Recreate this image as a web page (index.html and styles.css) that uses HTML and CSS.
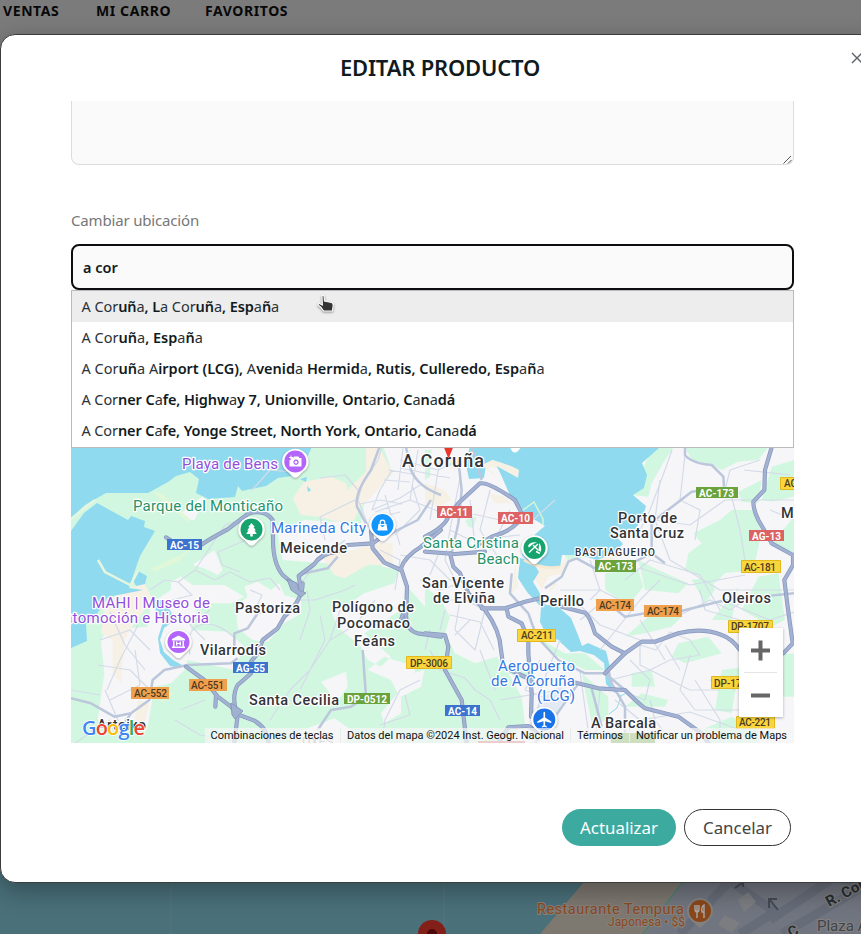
FILE: index.html
```html
<!DOCTYPE html>
<html lang="es">
<head>
<meta charset="utf-8">
<title>Editar producto</title>
<link rel="stylesheet" href="styles.css">
</head>
<body>
<div class="page">
  <nav class="nav"><a class="n1">VENTAS</a><a class="n2">MI CARRO</a><a class="n3">FAVORITOS</a></nav>
  <svg class="backmap" viewBox="0 870 861 64" width="861" height="64">
    <rect y="870" width="861" height="64" fill="#4a707a"/>
    <path d="M171 870V934M444 870V934" stroke="#57757d"/>
    <path d="M594 870L540 934H861V870Z" fill="#7d7870"/>
    <path d="M692 870L646 934H861V870Z" fill="#71757f"/>
    <path d="M692 870L643 934" stroke="#4c8175" stroke-width="1.5"/>
    <path d="M740 870L680 934M733 883L775 912L740 934M800 870L861 883M770 920L830 880M782 934L861 888" stroke="#666c78" stroke-width="9" fill="none"/>
    <path d="M724 915l16 8-8 10-14-8zM738 900l10-8 8 10-12 10z" fill="#7b7d80"/>
    <path d="M778 910L770 900m-1 8v-9h8M735 888l7-5m-6-2h7v6" stroke="#454a52" stroke-width="2" fill="none"/>
    <circle cx="432" cy="934" r="14" fill="#821f18"/><circle cx="432" cy="934" r="5" fill="#4c0908"/>
    <path d="M687 911a13 13 0 1 1 26 0c0 8-8 12-13 17-5-5-13-9-13-17z" fill="#83817e"/>
    <circle cx="700" cy="911" r="11" fill="#8a471a"/>
    <path d="M695 905v4q0 3 2 3t2-3v-4M697 905v13M704 918v-13q-3 2-2 7h2" stroke="#aaa" stroke-width="1.4" fill="none"/>
    <g class="bl"><text x="537" y="914" font-size="14.5" textLength="147" fill="#8c481e">Restaurante Tempura</text>
    <text x="608" y="926" font-size="12" textLength="77" fill="#8c481e">Japonesa • $$</text>
    <text x="817" y="931" font-size="15" fill="#3d444f">Plaza A</text>
    <text x="829" y="907" font-size="15" font-weight="700" fill="#272d35" transform="rotate(-28 829 907)">R. Cor</text>
    <text x="791" y="938" font-size="15" font-weight="700" fill="#272d35" transform="rotate(-28 791 938)">C</text></g>
  </svg>
</div>

<section class="modal">
  <header class="head"><h1>EDITAR PRODUCTO</h1>
    <svg class="close" width="12" height="12" viewBox="0 0 12 12"><path d="M1 1l10 10M11 1L1 11" stroke="#5e6068" stroke-width="1.4"/></svg>
  </header>
  <div class="body">
    <div class="area"><svg width="9" height="9" viewBox="0 0 9 9"><path d="M.5 8.5L8 1M5 8.500L8.500 5" stroke="#555" stroke-width="1"/></svg></div>
    <label class="label">Cambiar ubicación</label>
    <div class="input"><span>a cor</span></div>
    <div class="mapwrap">
    <svg class="map" viewBox="71 290 723 453" width="723" height="453">
      <defs>
        <g id="major">
          <g transform="translate(71 440) scale(.33333)">
            <path d="M285 292L320 315L390 315Q410 300 470 268L530 222Q580 205 605 240L606 300Q606 370 635 405L665 430L690 455"/>
            <path d="M695 430Q695 480 640 530L620 565L575 600L560 640L540 665V700L500 735Q485 760 492 800L505 825L550 842Q590 865 592 909"/>
            <path d="M345 680L400 720L440 770L480 800L500 825L490 909M435 765L433 800"/>
            <path d="M690 450L683 408L730 372Q750 340 800 335L830 315L905 310L930 292"/>
            <path d="M1110 270L1050 320Q1000 350 990 385L1008 440L1006 510Q1000 570 1040 580L1110 590M1000 510L990 540"/>
            <path d="M900 275L905 325L940 368L990 390"/>
          </g>
          <g transform="translate(425 440) scale(.33333)">
            <path d="M0 290Q60 260 70 230L100 190L165 130Q190 125 270 180L290 220Q285 265 200 290L150 320"/>
            <path d="M0 335L90 342L180 335"/>
            <path d="M75 340L85 380L105 400L130 460L180 510Q225 570 228 630L235 680L320 720"/>
            <path d="M170 505L240 505L300 485L345 475M245 505L250 530L290 550L310 600L310 640L320 760L318 830"/>
            <path d="M410 500L480 518Q495 530 510 580L560 620L600 640"/>
            <path d="M540 700L600 640L650 605L690 605L760 580Q830 562 890 585Q920 595 945 630"/>
            <path d="M440 725L520 745L600 750Q640 790 660 805L760 830L830 880L850 909"/>
            <path d="M1040 22L1020 90L1018 150L985 185Q985 210 1000 240L1040 310L1104 345V375L1078 420L1088 500L1103 610L1075 640"/>
            <path d="M0 580L60 585L70 620L60 690L110 780L125 909"/>
            <path d="M220 909L250 862L310 858L345 880"/>
          </g>
        </g>
      </defs>
      <rect x="71" y="290" width="723" height="453" fill="#d2f7e1"/>
      <g transform="translate(71 440) scale(.33333)">
        <path fill="#f6f6f8" d="M930 0L965 100L880 190L870 250L700 240L620 280L635 360L760 370L840 340L895 330L935 380L985 390L970 430L880 460L820 500L780 510L800 560L870 620L890 660L930 680L960 650L900 600L880 580L990 510L1010 440L1062 500H1110V0ZM520 440L560 425L600 450L625 430L640 465L690 480L690 520L640 550L590 605L545 600L500 565L495 500L530 470ZM365 375L430 330L455 390L440 405L400 385ZM300 425L330 410L365 435L460 435L520 470L480 490L420 490L370 500L300 470ZM240 490L300 450L380 500L360 570L470 575L520 620L490 690L350 660L340 690L300 730L250 740L230 860L150 870L80 840L100 700L90 600L110 570L230 560ZM330 220L400 165L385 210L370 240L345 240ZM750 725L825 695L830 740L795 790L770 750ZM890 690L940 650L1000 670L1040 650L1030 700L960 720ZM960 720L1060 690L1050 740L990 770L990 820L940 850L930 820L980 760ZM670 880L790 835L840 870L820 909H660Z"/>
        <path fill="#f6f0e5" d="M665 175L700 125L780 110L825 130L830 150L885 95L885 22L925 22L965 98L905 165L865 205L850 240L800 245L745 230L690 225ZM750 345L850 330L905 310L965 310L965 375L890 375L820 415L790 405ZM100 490L180 440L220 430L245 480L190 550L160 600L150 730L125 700L125 600L90 580ZM200 780L235 790L220 850L190 860Z"/>
        <path fill="#e0f8d7" d="M245 155L270 160L360 240L350 245ZM400 290L320 365L250 395L240 385L330 345ZM270 750L310 760L270 790Z"/>
      </g>
      <g transform="translate(425 440) scale(.33333)">
        <rect y="0" width="1107" height="909" fill="#f6f6f8"/>
        <g fill="#d2f7e1">
          <path d="M0 440L45 475L75 530L60 580L90 640L150 670L215 650L250 700L290 770L300 850L230 909H0ZM665 60L700 0H760L720 60L680 130L670 170L620 165ZM780 22L1030 22L1000 60L940 65L890 90L850 70L800 60ZM940 155L1010 120L1000 190L950 185ZM1040 80L1107 60V170L1040 185L1010 180Z"/>
          <path d="M885 240L920 210L985 210L1010 280L985 390L900 400L870 430L780 390L790 340L830 310L805 280ZM540 400L640 390L655 440L610 495L540 450ZM640 360L700 390L790 430L760 460L660 450ZM800 420L860 410L870 450L840 490ZM670 530L770 530L740 560L660 580L600 590ZM760 610L850 590L890 640L780 670L740 650ZM620 700L680 690L690 740L620 740ZM890 690L960 680L930 760L920 820L870 810ZM1000 410L1060 400L1080 540L1040 560L950 510ZM940 440L920 540L860 540ZM350 600L420 640L480 640L540 690L480 690L380 640ZM470 700L550 770L550 840L500 850ZM650 760L730 780L720 800L600 800ZM830 870L920 830L1000 870V909H840ZM120 240L155 230L145 265L130 260ZM0 30L20 30L15 110L0 120ZM255 660L310 700L300 720L250 700ZM1040 310L1107 230V340ZM410 330L500 345L430 365ZM1000 650L1107 640V770H1040ZM380 790L410 780L390 850L350 870Z"/>
        </g>
        <path fill="#f6f0e5" d="M0 130L60 150L80 180L40 200L0 190ZM60 60L110 60L95 90L60 80ZM190 160L240 170L260 190L210 190ZM170 65L270 95L280 112L200 80ZM300 350L370 385L400 380L430 350L410 400L370 410L350 450L310 380ZM270 370L280 440L260 460ZM500 360L580 345L560 365ZM380 430L400 430L370 460Z"/>
      </g>
      <!-- sea and inlets -->
      <g fill="#8fdaee">
        <path d="M71 290V518L85 505L106 493L148 493L168 482L176 476L190 472L199 479L196 493L208 499L235 497L238 486L242 491L266 486L278 478L292 476L306 460L315 440L390 440V290Z"/>
        <path d="M71 531L84 513L97 503L128 520L131 516L145 521L144 527L155 531L140 556L129 588L143 590L108 597L95 617L86 624L87 641L71 648Z"/>
        <path d="M138 571l9 5-2 8-9 2-3-6z"/>
        <path d="M150 600L165 600L175 620L164 628L160 640L164 652L173 660L182 665L180 668L170 666L160 653L158 638L163 622Z"/>
        <path d="M471 440L466 465L469 479L484 478L486 465L494 460L502 477L512 500L522 512L545 526L540 530L531 538L525 541L522 555L531 564L546 567L560 567L562 555L580 555L597 560L612 554L623 544L616 536L635 529L642 520L646 506L633 495L644 488L647 475L642 463L658 449L663 440Z"/>
        <path d="M520 558L518 578L527 592L541 607L540 622L545 632L558 640L571 652L580 651L594 655L604 663L606 684L613 691L609 675L610 667L606 651L588 643L582 646L578 635L571 618L556 605L546 605L538 590L533 582L539 572L532 561Z"/>
        <path d="M300 479l7-2-1 5zM307 486l4 4-3 2z"/>
      </g>
      <path d="M174 439h120q-14 24-40 36l-22 4q-20-4-30-39" fill="#8fdaee"/>
      <path d="M482 465l10-5q14 3 27 10l-1 8-23-13-6 3 8 10z" fill="#f6f0e5"/>
      <path d="M98 560L105 572L136 588M131 584L138 571M71 519l24-19" fill="none" stroke="#e5f5df" stroke-width="2.500"/>
      <path d="M519 513l15-11 9 17v7" fill="none" stroke="#d6f5d8" stroke-width="1.500"/>
      <path d="M524 560q18 10 36 7" fill="none" stroke="#f6e9d3" stroke-width="3"/>
      <path d="M613 691l8 5 7-4M621 696l-4 12-8 6" fill="none" stroke="#8fdaee" stroke-width="1"/>
      <path d="M540 700l20-14 8 8-30 46h-14z" fill="#e3e9f5"/>
      <!-- local streets -->
      <g class="minor">
        <path d="M110 612L125 645L145 670M100 640L130 630L150 650M98 665L130 670L150 690M107 690L120 660L138 625M110 700L140 685L135 650M120 725L105 690M205 640L190 625L210 610M190 655Q185 630 200 625T235 638"/>
        <path d="M150 590L165 580L178 582L195 570L205 555L225 525L240 520M178 582L192 595L172 600M195 570L215 580L230 572L250 582L270 578L280 590M246 540L218 552L222 565L240 572M250 590L262 595L255 610M300 585L315 565L345 540M355 500L320 517L325 540M252 490L270 470L292 472M320 478L345 475L358 490M295 600L315 600L345 590L355 585"/>
        <path d="M71 690L100 695M75 743L110 720M270 720L290 690L310 670L330 640L340 610M300 690L325 640L320 615M307 590L310 610L300 640M175 720L200 735L230 740M180 710L205 700"/>
        <path d="M384 440L378 460L362 485L358 500L370 530M392 470L380 490L372 510L400 498L420 485M375 512L410 500L440 512M385 495L400 545M412 485L420 510L395 535M400 460L438 470L455 462M400 468L450 478M418 450L410 500M440 460L430 520M360 504L380 500L402 504M370 520L400 512M384 480L410 482M388 470L412 474M403 448L398 490M460 478L450 530L470 540L520 535M455 510L500 520M470 500L475 545M490 490L480 530L500 560M510 510L490 550"/>
        <path d="M380 550L400 560L395 590M400 555L430 560L450 580L480 580M420 580L440 590L455 585M438 555L430 575M450 530L445 560L455 580M440 600L460 600L455 630L475 650L485 610L465 600M450 615L480 622L494 650M455 635L470 620M445 610L440 630M330 640L355 625L375 600"/>
        <path d="M382 743L385 720L400 690L420 680M405 695L410 715L380 725M430 650L440 670L465 678L475 690L490 700L500 720M425 650L430 630M480 650L495 690"/>
        <path d="M660 480L655 520L670 560L720 590L794 590M655 520L690 525L725 500L794 500M685 455L680 500L700 510L695 540M730 490L740 530L745 560M745 600L730 610L710 600L680 615M760 460L730 470L725 490M625 580L650 560L700 575L720 610M560 590L600 590L620 600M600 650L640 600L660 580M580 620L605 600M575 600L600 625L640 640M533 520L555 500"/>
        <path d="M610 680L650 670L670 660L700 655L690 640L670 632L656 650L640 645L640 665L660 675L690 690L720 690M630 660L650 680L645 700L620 690M640 620L665 660M690 655L680 690L695 710L740 710M615 700L640 720L690 712L740 730M650 700L655 720L670 740M665 645L680 670M695 680L720 720L720 743M540 660L525 690L550 700M560 640L540 690L535 740M580 672L590 743M600 690L595 743M500 700L560 690M710 680L735 690"/>
        <path d="M640 530L650 510L665 470L672 450M700 590L705 610L740 620M720 600L770 620L794 612M744 470L790 475M770 510L794 520M640 568L690 585L745 575M590 560L600 590L590 600"/>
      </g>
      <g class="mid">
        <g transform="translate(71 440) scale(.33333)"><path d="M180 820L235 780L245 720L280 690L350 675L480 670L500 655M490 640V580L530 565L560 520L610 500M0 775L60 790L130 830L180 820L160 850M875 630L880 700L885 770L840 800L780 810L740 870M925 22L900 90Q850 160 858 200L890 260M1005 22L1020 90Q1040 140 1110 165M960 280L1040 240L1080 180M700 400L770 385L800 350"/></g>
        <g transform="translate(425 440) scale(.33333)"><path d="M360 445L410 410L430 365L455 355L510 385M620 370L670 345L690 345M780 22L780 45Q800 70 860 75L895 110L897 140M690 240L800 155L840 150M680 250V340L720 370M760 515L880 485L960 475L1107 460M575 510L600 530L660 520M100 60L110 150L100 250L80 340M260 400L255 460L310 520L335 590L400 660L480 700L540 700L600 750M140 20L170 120M330 909L390 830L460 730M550 690L560 730L600 800V909M500 745L530 860"/></g>
      </g>
      <use class="edge" href="#major"/><use class="core" href="#major"/>
      <path d="M287 579l10 4 2 7 7 3-5 4-10-7zM231 703l12 8-8 8-3-4z" fill="#a0b0d1" stroke="#8899bd" stroke-width="1"/>
      <!-- road shields -->
      <g class="shield">
        <g fill="#3b73cf"><path d="M167 539h35v11h-35zM233 662h35v11h-35zM445 705h35v11h-35z"/></g>
        <g fill="#dc6263"><path d="M437 506h35v12h-35zM498 512h35v12h-35zM749 530h35v11h-35z"/></g>
        <g fill="#6aa33b"><path d="M696 487h42v11h-42zM595 560h41v12h-41zM344 693h46v11h-46z"/></g>
        <g fill="#f0a04c"><path d="M189 679h38v12h-38zM131 687h38v12h-38zM596 599h38v12h-38zM644 605h38v12h-38z"/></g>
        <g fill="#fad53c" stroke="#e1b91f"><path d="M780.5 477.500h20v12h-20zM741.500 560.500h39v12h-39zM517.500 629.500h38v12h-38zM406.500 656.500h45v12h-45zM728.500 620.500h44v12h-44zM711.500 676.500h40v12h-40zM736.500 716.500h38v12h-38z"/></g>
        <g fill="#fff" font-weight="700">
          <text x="170" y="548.5" textLength="29">AC-15</text><text x="236" y="671.5" textLength="29">AG-55</text><text x="448" y="714.5" textLength="29">AC-14</text>
          <text x="440" y="515.500" textLength="28">AC-11</text><text x="501" y="521.500" textLength="29">AC-10</text><text x="752" y="539.5" textLength="29">AG-13</text>
          <text x="699" y="496.5" textLength="35">AC-173</text><text x="598" y="570" textLength="35">AC-173</text><text x="347" y="702.5" textLength="40">DP-0512</text>
        </g>
        <g fill="#4b3b22" font-weight="500">
          <text x="191" y="689" textLength="33">AC-551</text><text x="134" y="697" textLength="33">AC-552</text><text x="599" y="608.5" textLength="32">AC-174</text><text x="647" y="615" textLength="32">AC-174</text>
          <text x="784" y="487">AC-</text><text x="744" y="570.5" textLength="32">AC-181</text><text x="521" y="639" textLength="32">AC-211</text><text x="410" y="666.5" textLength="38">DP-3006</text><text x="731" y="630" textLength="38">DP-1707</text><text x="714" y="686.5">DP-1706</text><text x="739" y="726" textLength="32">AC-221</text>
        </g>
      </g>
      <!-- place labels -->
      <g class="poi" fill="#9150dc"><text x="182" y="469" textLength="96">Playa de Bens</text><text x="92" y="607.500" textLength="118">MAHI | Museo de</text><text x="54" y="623" textLength="155">Automoción e Historia</text></g>
      <g class="poi" fill="#24936a"><text x="133" y="510.500" textLength="150">Parque del Monticaño</text><text x="423" y="548" textLength="96">Santa Cristina</text><text x="477" y="563.5" textLength="42">Beach</text></g>
      <g class="poi" fill="#3478df"><text x="271" y="532.500" textLength="95">Marineda City</text><text x="498" y="670.500" textLength="77">Aeropuerto</text><text x="491" y="686" textLength="84">de A Coruña</text><text x="537" y="701" textLength="38">(LCG)</text></g>
      <g class="town">
        <text x="402" y="466.5" font-size="18" textLength="82">A Coruña</text><text x="280" y="552.500" textLength="67">Meicende</text><text x="422" y="588" textLength="82">San Vicente</text><text x="433" y="603" textLength="62">de Elviña</text><text x="235" y="613" textLength="65">Pastoriza</text><text x="332" y="612" textLength="82">Polígono de</text><text x="337" y="627.5" textLength="73">Pocomaco</text><text x="354" y="646" textLength="41">Feáns</text><text x="200" y="654.500" textLength="66">Vilarrodís</text><text x="249" y="704.5" textLength="90">Santa Cecilia</text><text x="618" y="522.500" textLength="59">Porto de</text><text x="610" y="538" textLength="74">Santa Cruz</text><text x="540" y="605.5" textLength="44">Perillo</text><text x="722" y="603" textLength="49">Oleiros</text><text x="591" y="727.500" textLength="65">A Barcala</text><text x="781" y="518">Mera</text><text x="97" y="730" textLength="49">Arteixo</text>
        <text x="575" y="556" font-size="10" textLength="80">BASTIAGUEIRO</text>
      </g>
      <text x="302" y="746" font-size="13" fill="#999" class="plain">UXES</text>
      <path d="M611 733h44v10h-44z" fill="#6aa33b"/><path d="M478 741h47v2h-47z" fill="#dc6263"/>
      <!-- pins -->
      <g fill="#fff" class="pins">
        <path d="M282 462a13.300 13.300 0 1 1 26.600 0q0 6-6 10l-5 5q-2.300 1.500-4.600 0l-5-5q-6-4-6-10z"/><path d="M165.200 642.500a13.300 13.300 0 1 1 26.600 0q0 6-6 10l-5 5q-2.300 1.500-4.600 0l-5-5q-6-4-6-10z"/><path d="M238.200 530a13.300 13.300 0 1 1 26.600 0q0 6-6 10l-5 5q-2.300 1.500-4.600 0l-5-5q-6-4-6-10z"/><path d="M521.200 548.500a13.300 13.300 0 1 1 26.600 0q0 6-6 10l-5 5q-2.300 1.500-4.600 0l-5-5q-6-4-6-10z"/><path d="M369.200 525.500a13.300 13.300 0 1 1 26.600 0q0 6-6 10l-5 5q-2.300 1.500-4.600 0l-5-5q-6-4-6-10z"/><path d="M531 720a13.300 13.300 0 1 1 26.600 0q0 6-6 10l-5 5q-2.300 1.500-4.600 0l-5-5q-6-4-6-10z"/>
      </g>
      <circle cx="295.300" cy="461.500" r="11" fill="#b264fb"/><circle cx="178.500" cy="642" r="11" fill="#b264fb"/><circle cx="251.500" cy="529.500" r="11" fill="#17a36e"/><circle cx="534.500" cy="548" r="11" fill="#17a36e"/><circle cx="382.500" cy="525" r="11" fill="#1296fb"/><circle cx="544.300" cy="719.500" r="11" fill="#1a73e8"/>
      <g fill="#fff">
        <path fill-rule="evenodd" d="M291 458h2l1-1.500h4.500l1 1.500h2v8.500h-12V460h1.500zm5 1.500a2.700 2.700 0 1 0 .1 0z"/><circle cx="296" cy="462.200" r="1.300"/><path d="M289 457.500h4M291 455.500v4" stroke="#fff"/>
        <path d="M251.500 523l-3.300 4h1.300l-2.300 3.500h1.300l-2.300 3.500h4v2.500h2.600V534h4l-2.300-3.500h1.300l-2.300-3.500h1.300z"/>
        <path fill-rule="evenodd" d="M378.500 524h8l1 6.500h-10zm1.700 1.200q2.300 3.500 4.600 0z"/><path d="M380.200 524v-1.500a2.300 2.300 0 0 1 4.600 0v1.500" fill="none" stroke="#fff" stroke-width="1.200"/>
        <path d="M178.500 635.500l6.500 3.500v1.500h-13V639zM173 641h1.500v6H173zM182.500 641h1.500v6h-1.500zM172 646.500h13v1.500h-13zM176 641.500h1.400v1.500h2.200v-1.500h1.400v4h-1.400V644h-2.200v1.500H176z"/>
        <path d="M543.500 712.500q.8-1.500 1.600 0v5l6.200 4v1.500l-6.200-1.800v4l1.700 1.300v1l-2.500-.7-2.500.7v-1l1.700-1.300v-4l-6.200 1.800v-1.500l6.200-4z"/>
        <path d="M528 546q2-4.500 9-3.500l-4 1.500-4 3.500zM539 543q3.500 4 1.500 9l-2-1.500.5-5z"/><path d="M529 552.500l9-8.500M533 545l5.500 5.500M536 551.500l4 2" stroke="#fff" stroke-width="1.400"/>
      </g>
      <path d="M441 440h15l-6 15q-1.500 5-3 0z" fill="#ea352b"/><path d="M508 444h16l-6 7q-3 3-6 0z" fill="#fff"/>
      <!-- attribution -->
      <rect x="205" y="728" width="589" height="15" fill="#f5f5f5" fill-opacity=".72"/>
      <path d="M340.500 728v14M570.500 728v14M629.500 728v14" stroke="#e5eee9"/>
      <g class="attr"><text x="210.500" y="739" textLength="123">Combinaciones de teclas</text><text x="347" y="739" textLength="217">Datos del mapa ©2024 Inst. Geogr. Nacional</text><text x="577" y="739" textLength="46">Términos</text><text x="636" y="739" textLength="151">Notificar un problema de Maps</text></g>
      <!-- wordmark -->
      <text class="google" x="82" y="735" textLength="63"><tspan fill="#4285f4">G</tspan><tspan fill="#ea4335">o</tspan><tspan fill="#fbbc04">o</tspan><tspan fill="#4285f4">g</tspan><tspan fill="#34a853">l</tspan><tspan fill="#ea4335">e</tspan></text>
      <!-- zoom control -->
      <rect class="zoomer" x="739" y="628" width="44" height="89" fill="#fff"/>
      <path d="M744 672.500h33" stroke="#e5e5e5"/><path d="M751 650.500h19M760.500 640.500v20M751 695.500h19" stroke="#666" stroke-width="4"/>
    </svg>
    <ul class="menu">
      <li class="r1">A Cor<b>uñ</b>a<b>, L</b>a Cor<b>uñ</b>a<b>, Esp</b>a<b>ñ</b>a</li>
      <li class="r2">A Cor<b>uñ</b>a<b>, Esp</b>a<b>ñ</b>a</li>
      <li class="r3">A Cor<b>uñ</b>a A<b>irport (LCG), </b>A<b>venid</b>a <b>Hermid</b>a<b>, Rutis, Culleredo, Esp</b>a<b>ñ</b>a</li>
      <li class="r4">A Cor<b>ner C</b>a<b>fe, Highw</b>a<b>y 7, Unionville, Ont</b>a<b>rio, C</b>a<b>n</b>a<b>dá</b></li>
      <li class="r5">A Cor<b>ner C</b>a<b>fe, Yonge Street, North York, Ont</b>a<b>rio, C</b>a<b>n</b>a<b>dá</b></li>
    </ul>
    <svg class="cursor" width="18" height="20" viewBox="0 0 18 20"><path d="M5 1.500Q6.500.5 7 2l.5 5 7 1.500q2 .5 1.700 3L15.500 17H6.500L4 13.500 1 11Q1 9.500 2.500 9.500l2.800 1.500z" fill="#333" stroke="#fff" stroke-width="1.200"/></svg>
    </div>
  </div>
  <footer class="foot"><button class="ok">Actualizar</button><button class="no">Cancelar</button></footer>
</section>
</body>
</html>
```
FILE: styles.css
```css
* { box-sizing: border-box; }
html, body { margin: 0; height: 934px; overflow: hidden; }
body { font-family: "Noto Sans", sans-serif; color: #111a20; position: relative; }
.page { height: 934px; background: #7b7b7b; display: flex; flex-direction: column; justify-content: space-between; }
.nav { display: flex; padding-left: 3px; height: 22px; align-items: center; font-size: 14px; font-weight: 700; letter-spacing: .6px; color: #080808; line-height: 22px; white-space: nowrap; }
.nav a { display: block; }
.n1 { width: 93px; }
.n2 { width: 109px; }
.backmap { display: block; }
.bl { font-family: Roboto, sans-serif; paint-order: stroke; stroke: #85827d; stroke-width: 2px; }
.modal { position: absolute; left: 0; top: 34px; width: 880px; height: 849px; background: #fff; border: 1px solid #3c3c3c; border-radius: 15px; box-shadow: 0 8px 26px rgba(0,0,0,.32); display: flex; flex-direction: column; padding: 0 85px 0 70px; }
.head { height: 66px; display: flex; justify-content: center; position: relative; }
h1 { margin: 0 0 0 15px; padding-top: 16px; font-size: 22px; line-height: 32px; font-weight: 600; letter-spacing: -.2px; white-space: nowrap; }
.close { position: absolute; left: 780px; top: 17px; }
.body { width: 723px; }
.area { height: 64px; border: 1px solid #dcdcde; border-top: 0; border-radius: 0 0 8px 8px; background: #fafafa; display: flex; align-items: flex-end; justify-content: flex-end; padding: 0 1px 0 0; }
.label { display: block; margin-top: 43px; height: 24px; line-height: 24px; font-size: 15px; letter-spacing: -.17px; color: #777; }
.input { margin-top: 12px; height: 46px; border: 2px solid #0c0d10; border-radius: 8px; background: #fafafa; padding: 0 10px; line-height: 43px; font-size: 14.500px; font-weight: 600; }
.mapwrap { position: relative; height: 453px; }
.map { display: block; }
.menu { position: absolute; left: 0; top: 0; width: 723px; height: 158px; margin: 0; padding: 0; list-style: none; background: #fff; border: 1px solid #bbb; font-size: 14.500px; }
.menu li { height: 31px; line-height: 30px; padding-left: 9.500px; white-space: pre; color: #2b3238; }
.menu b { font-weight: 600; color: #111a20; }
.r1 { background: #ededed; letter-spacing: -.07px; }
.r4 { letter-spacing: -.09px; }
.r5 { letter-spacing: -.11px; }
.cursor { position: absolute; left: 246px; top: 4px; filter: drop-shadow(0 1px 1px rgba(0,0,0,.4)); }
.foot { display: flex; justify-content: flex-end; gap: 8px; margin-top: 66px; margin-right: 3px; }
.foot button { font-family: inherit; font-size: 16.900px; height: 37px; border-radius: 19px; padding: 0; line-height: 34px; }
.ok { width: 114px; background: #3caa9f; color: #fff; border: 0; }
.no { width: 107px; background: #fff; color: #444; border: 1px solid #333; }
.minor { fill: none; stroke: #d4dbe8; stroke-width: 1.200; stroke-linejoin: round; }
.mid { fill: none; stroke: #bcc7dc; stroke-width: 7.500; stroke-linejoin: round; }
.edge, .core { fill: none; stroke-linejoin: round; stroke-linecap: round; }
.edge { stroke: #8798bd; stroke-width: 12.500; }
.core { stroke: #a3b2d3; stroke-width: 8; }
.shield { font-family: Roboto, sans-serif; font-size: 10px; }
.shield text { stroke: none; }
.poi { font-family: Roboto, sans-serif; font-size: 15px; paint-order: stroke; stroke: #fff; stroke-width: 2.500px; stroke-linejoin: round; }
.town { font-family: Roboto, sans-serif; font-size: 14.500px; font-weight: 500; fill: #303438; paint-order: stroke; stroke: #fff; stroke-width: 2.500px; stroke-linejoin: round; }
.plain { font-family: Roboto, sans-serif; }
.pins { filter: drop-shadow(0 1px 1px rgba(0,0,0,.3)); }
.attr { font-family: Roboto, sans-serif; font-size: 11px; fill: #111; }
.google { font-family: "Open Sans", sans-serif; font-size: 20px; font-weight: 600; paint-order: stroke; stroke: #fff; stroke-width: 1.500px; }
.zoomer { filter: drop-shadow(0 1px 1.500px rgba(0,0,0,.3)); }
```
